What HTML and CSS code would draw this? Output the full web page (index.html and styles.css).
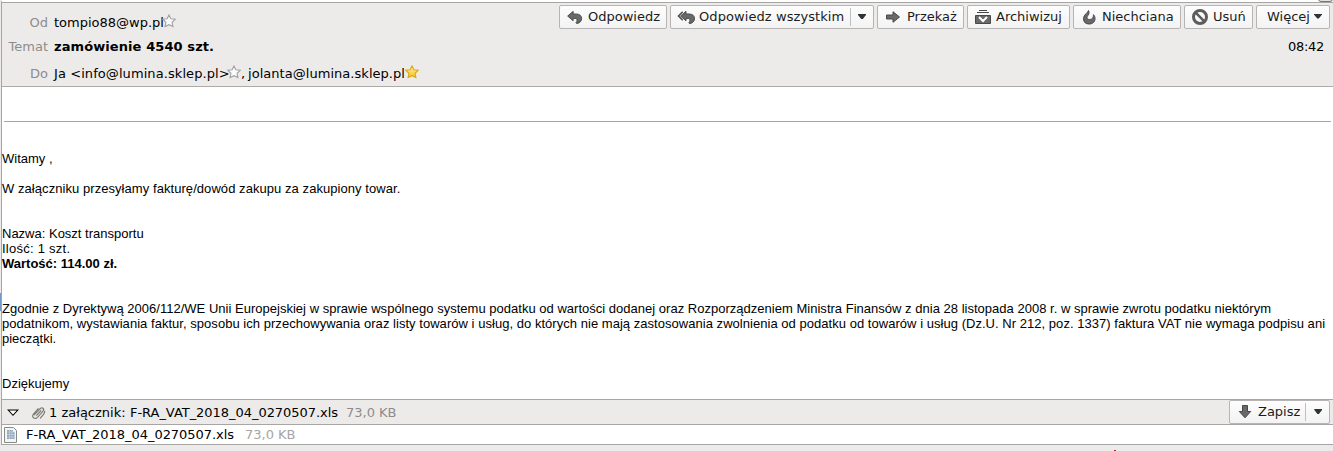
FILE: index.html
```html
<!DOCTYPE html>
<html lang="pl">
<head>
<meta charset="utf-8">
<title>zamówienie 4540 szt.</title>
<link rel="stylesheet" href="styles.css">
</head>
<body>
<svg width="0" height="0" class="defs">
  <defs>
    <linearGradient id="gold" x1="0" y1="0" x2="0" y2="1"><stop offset="0" stop-color="#fff3a0"/><stop offset="1" stop-color="#f6c21c"/></linearGradient>
    <path id="star" d="M7 .9l1.900 3.900 4.300.5-3.100 3 .8 4.300L7 10.700l-3.900 1.900.8-4.300-3.100-3 4.300-.5z"/>
    <path id="reply" d="M.7 7 6.500 2v2.800h3c4 0 6 2 6 4.700 0 2.500-1.500 4.800-5 5.500-.8-.2-1-.8-.8-1.300 1.300-1 1.600-4.200-1-4.200H6.500V12z"/>
  </defs>
</svg>
<div class="window">
  <i class="marker"></i>
  <main class="pane">
    <header class="head">
      <div class="fields">
        <span class="label from">Od</span><span class="value from">tompio88@wp.pl<svg class="star" viewBox="0 0 14 14"><use href="#star"/></svg></span>
        <span class="label subject">Temat</span><b class="value subject">zamówienie 4540 szt.</b>
        <span class="label to">Do</span><span class="value to"><span class="own">Ja &lt;info@lumina.sklep.pl&gt;</span><svg class="star" viewBox="0 0 14 14"><use href="#star"/></svg><span class="comma">,</span><span class="other">jolanta@lumina.sklep.pl</span><svg class="star starred" viewBox="0 0 14 14"><use href="#star"/></svg></span>
      </div>
      <div class="side">
        <div class="toolbar">
          <button class="btn reply"><svg viewBox="0 0 17 16"><use href="#reply"/></svg>Odpowiedz</button>
          <button class="btn replyall"><svg viewBox="0 0 19 16"><path class="thin" d="M6 2.500 1.500 7 6 11.500"/><use href="#reply" x="3"/></svg><span class="wide">Odpowiedz wszystkim</span><i class="split"></i><i class="arrow"></i></button>
          <button class="btn forward"><svg viewBox="0 0 16 16"><path d="M1.500 6H8V2.700L14.500 8 8 13.300V10H1.500z"/></svg>Przekaż</button>
          <button class="btn archive"><svg viewBox="0 0 16 16"><path d="M4 1.500h8M2 3.500h12"/><path d="M.5 6.500h15v8H.5z"/><path class="white" d="M4 8l4 4 4-4"/></svg>Archiwizuj</button>
          <button class="btn junk"><svg viewBox="0 0 16 16"><path d="M7.500 1.500c-1 3-5 4-5 8.200C2.500 13 4.500 15 8 15s6-2 6-5.300c0-1.700-.5-3-1.500-4-.2 2.300-.5 4.800-3.900 4.800-3.200 0-3-2.500-1.700-4C8.200 5 8.300 3 7.500 1.500z"/></svg>Niechciana</button>
          <button class="btn delete"><svg viewBox="0 0 16 16"><circle class="ring" cx="8" cy="8" r="6.500"/><path class="bar" d="M3.700 3.700l8.600 8.600"/></svg>Usuń</button>
          <button class="btn more">Więcej<i class="arrow"></i></button>
        </div>
        <time>08:42</time>
      </div>
    </header>
    <article class="message">
      <hr>
      <p>Witamy ,</p>
      <p class="intro">W załączniku przesyłamy fakturę/dowód zakupu za zakupiony towar.</p>
      <p class="gap">Nazwa: Koszt transportu<br><span class="quantity">Ilość: 1 szt.</span><br><b>Wartość: 114.00 zł.</b></p>
      <p class="gap"><span class="law">Zgodnie z Dyrektywą 2006/112/WE Unii Europejskiej w sprawie wspólnego systemu podatku od wartości dodanej oraz Rozporządzeniem Ministra Finansów z dnia 28 listopada 2008 r. w sprawie zwrotu podatku niektórym</span><br><span class="terms">podatnikom, wystawiania faktur, sposobu ich przechowywania oraz listy towarów i usług, do których nie mają zastosowania zwolnienia od podatku od towarów i usług (Dz.U. Nr 212, poz. 1337) faktura VAT nie wymaga podpisu ani</span><br>pieczątki.</p>
      <p class="gap">Dziękujemy</p>
    </article>
    <section class="attachments">
      <svg class="twisty" viewBox="0 0 12 8"><path d="M1.200 1h9.600L6 6.300z"/></svg>
      <svg class="clip" viewBox="0 0 14 14"><path class="edge" d="M3 9.500l5.500-6c2-2 4.500 0 2.700 2.200L6 11.500c-2.500 2.500-6-.3-3.700-3L7 3.200M5 10l4.500-5M12.700 5.500c.3 1.500-.3 2.500-1.200 3.500l-3 3.500"/><path class="shine" d="M3.500 9.700l5.300-5.700c1.200-1 2.700 0 1.700 1.300L5.500 11"/></svg>
      <span class="count">1 załącznik:</span><span class="name">F-RA_VAT_2018_04_0270507.xls</span><span class="size">73,0 KB</span>
      <button class="btn save"><svg viewBox="0 0 16 16"><path d="M5.500 1.500h5v6h3.200L8 13.800 2.300 7.500h3.200z"/></svg>Zapisz<i class="split"></i><i class="arrow"></i></button>
    </section>
    <section class="files">
      <svg viewBox="0 0 13 16"><path class="page" d="M.5.5h9l3 3v12H.5z"/><path class="cells" d="M3 3h6v2h1.500v7H3z"/><path class="grid" d="M3 5h7.500M3 7.500h7.500M3 10h7.500M5.500 3v9M8 3v9"/></svg>
      <span class="file">F-RA_VAT_2018_04_0270507.xls</span><span class="size">73,0 KB</span>
    </section>
  </main>
  <i class="corner"></i><i class="speck"></i>
</div>
</body>
</html>
```
FILE: styles.css
```css
* { box-sizing: border-box; }
body { margin: 0; background: #edebea; font: 13px/16px "DejaVu Sans", sans-serif; color: #000; overflow: hidden; }
.defs { position: absolute; }
.window { position: relative; width: 1333px; height: 451px; padding-left: 1px; overflow: hidden; }
.marker { position: absolute; left: 0; top: 293px; width: 1px; height: 18px; background: #6f97c9; }
.corner { position: absolute; left: 1318px; top: -5px; width: 15px; height: 7px; border: 1px solid #777570; border-radius: 3px; background: #e5e3df; }
.speck { position: absolute; left: 1114px; top: 450px; width: 2px; height: 1px; background: #b22; }
.pane { height: 445px; border-left: 1px solid #a8a6a4; border-bottom: 1px solid #a8a6a4; border-top: 2px solid #fff; background: #fff; }
.head { height: 85px; border-top: 1px solid #a8a6a4; border-bottom: 1px solid #aeaaa7; background: #edebea; display: flex; justify-content: space-between; }
.fields { display: grid; grid-template-columns: 46px auto; column-gap: 6px; grid-template-rows: 25px 26px 27px; padding-top: 4px; white-space: nowrap; }
.label { color: #8e8c8a; text-align: right; line-height: 32px; }
.value { display: flex; line-height: 32px; }
.label.subject, .value.subject { line-height: 30px; }
.value.subject { letter-spacing: .09px; }
.star { width: 14px; height: 14px; margin: 7px 0 0 -2px; fill: #fbfbfb; stroke: #a2a2a2; stroke-width: 1.1; flex: none; }
.to .star { margin-top: 7px; }
.star.starred { fill: url(#gold); stroke: #dda51d; }
.own { width: 175px; letter-spacing: .08px; }
.comma { width: 7px; }
.other { width: 159px; letter-spacing: .04px; }
.side { padding: 2px 3px 0 0; display: flex; flex-direction: column; align-items: flex-end; }
.toolbar { display: flex; gap: 3px; }
.btn { height: 24px; padding: 0; border: 1px solid #b7b5b4; border-radius: 2px; background: linear-gradient(#fdfdfd, #f3f3f3); font: 13px/20px "DejaVu Sans", sans-serif; color: #1c1c1c; display: flex; align-items: center; white-space: nowrap; }
.btn svg { width: 16px; height: 16px; flex: none; fill: #696969; stroke: #484848; stroke-width: 1; }
.btn svg .thin { fill: none; stroke-width: 1.5; }
.btn svg .white { fill: none; stroke: #fff; stroke-width: 2; }
.btn svg .ring { fill: none; stroke: #5c5c5c; stroke-width: 3; }
.btn svg .bar { stroke: #5c5c5c; stroke-width: 2.5; }
.reply { width: 108px; padding-left: 7px; gap: 5px; }
.replyall { width: 204px; padding-left: 6px; gap: 4px; }
.btn.replyall svg { width: 18px; }
.wide { letter-spacing: .08px; }
.forward { width: 87px; padding-left: 7px; gap: 6px; }
.archive { width: 103px; padding-left: 7px; gap: 5px; }
.junk { width: 108px; padding-left: 7px; gap: 5px; }
.delete { width: 69px; padding-left: 7px; gap: 5px; }
.more { width: 74px; padding-left: 10px; }
.split { width: 1px; height: 18px; background: #c2c0bf; margin-left: auto; }
.arrow { width: 8px; height: 5px; background: #2e3436; clip-path: polygon(0 0, 100% 0, 100% 20%, 60% 100%, 40% 100%, 0 20%); margin: 0 7px 2px auto; }
.split + .arrow { margin: 0 7px 1px 3px; }
.replyall .split + .arrow { margin-left: 3px; }
time { line-height: 16px; margin: 10px 6px 0 0; letter-spacing: -.3px; }
.message { height: 312px; padding: 34px 0 0; font: 13px/15px "Liberation Sans", sans-serif; white-space: nowrap; }
.intro { letter-spacing: .06px; }
.quantity { letter-spacing: .25px; }
.law { letter-spacing: .016px; }
.terms { letter-spacing: .036px; }
hr { border: 0; height: 1px; background: #a5a5a5; margin: 0 2px 29px; }
p { margin: 0 0 15px; }
p.gap { margin-top: 30px; }
.attachments { height: 26px; border: solid #a8a6a4; border-width: 1px 0; background: #edebea; display: flex; align-items: center; padding: 0 3px 0 5px; }
.twisty { width: 12px; height: 8px; fill: #fff; stroke: #000; stroke-width: 1.1; margin: 1px 12px 0 0; }
.clip { width: 15px; height: 15px; margin-right: 3px; fill: none; }
.edge { stroke: #777871; stroke-width: 1.1; }
.shine { stroke: #c7c8c1; stroke-width: .8; }
.attachments > span { padding-top: 2px; }
.count { width: 81px; }
.name { width: 216px; letter-spacing: -.04px; }
.size { color: #8e8c8a; }
.save { margin-left: auto; width: 101px; padding-left: 7px; gap: 5px; }
.save .split { margin-left: 1px; }
.save .split { margin-left: auto; }
.files { height: 19px; display: flex; align-items: center; padding-left: 2px; }
.files svg { width: 13px; height: 16px; }
.page { fill: #f4f4f2; stroke: #888a85; }
.cells { fill: #91a5bc; }
.grid { stroke: #d4dde7; stroke-width: .6; }
.file { margin-left: 9px; width: 219px; letter-spacing: -.04px; }
.files .size { color: #a8a6a4; }
```
